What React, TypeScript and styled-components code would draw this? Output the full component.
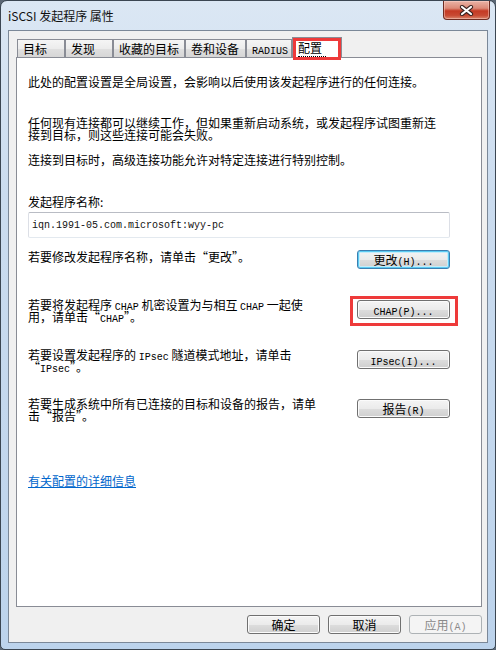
import styled, { createGlobalStyle } from "styled-components";

const GlobalStyle = createGlobalStyle`
  html, body {
    margin: 0;
    padding: 0;
    background: #5b6775;
  }
  body {
    font-family: "Noto Sans CJK SC", "Liberation Sans", sans-serif;
    font-size: 12px;
    color: #000;
  }
`

const Window = styled.div`
  width: 496px;
  height: 650px;
  box-sizing: border-box;
  border: 1px solid #3b4652;
  border-radius: 7px 7px 5px 5px;
  background: linear-gradient(180deg, #dbe7f4 0%, #cbdcef 30%, #bcd3ec 100%);
  padding: 0 7px 6px 7px;
  display: flex;
  flex-direction: column;
`

const TitleBar = styled.div`
  height: 29px;
  display: flex;
  justify-content: space-between;
  align-items: flex-start;
  flex-shrink: 0;
`

const Title = styled.div`
  margin-top: 7px;
  line-height: 16px;
  font-size: 12px;
  color: #111;
`

const CloseButton = styled.div`
  width: 47px;
  height: 19px;
  margin-right: -2px;
  box-sizing: border-box;
  border: 1px solid #6e2c22;
  border-top: none;
  border-radius: 0 0 4px 4px;
  background: linear-gradient(180deg, #eab3a6 0%, #dc8a78 40%, #c43a24 55%, #c84a33 80%, #d9866d 100%);
  box-shadow: inset 0 0 0 1px rgba(255, 220, 210, 0.45);
  display: flex;
  align-items: center;
  justify-content: center;
`

const Client = styled.div`
  flex: 1;
  border: 1px solid #7b8898;
  background: #f0f0f0;
  padding: 6px 5px 8px 7px;
  display: flex;
  flex-direction: column;
`

const TabStrip = styled.div`
  height: 20px;
  display: flex;
  align-items: flex-end;
  padding-left: 1px;
  position: relative;
  z-index: 1;
`

const Tab = styled.div<{ $w: number; $active?: boolean }>`
  position: relative;
  width: ${p => p.$w}px;
  height: ${p => (p.$active ? 21 : 18)}px;
  margin-bottom: ${p => (p.$active ? -1 : 0)}px;
  box-sizing: border-box;
  border: 1px solid #898c95;
  border-bottom: none;
  background: ${p => (p.$active ? '#fff' : 'linear-gradient(180deg, #f5f5f5 0%, #ececec 50%, #e0e0e0 51%, #d6d6d6 100%)')};
  padding-left: 5px;
  line-height: ${p => (p.$active ? 19 : 17)}px;
  white-space: nowrap;
`

const FocusLabel = styled.span`
  border-bottom: 1px dotted #000;
  padding: 0 4px 0 0;
`

const Highlight = styled.div<{ $t: number; $l: number; $r: number; $b: number }>`
  position: absolute;
  top: ${p => p.$t}px;
  left: ${p => p.$l}px;
  right: ${p => p.$r}px;
  bottom: ${p => p.$b}px;
  border: 3px solid #ee3a3a;
  pointer-events: none;
`

const Panel = styled.div`
  height: 550px;
  box-sizing: border-box;
  background: #fff;
  border: 1px solid #898c95;
  padding: 0 31px 0 11px;
  display: flex;
  flex-direction: column;
`

const Para = styled.p<{ $top: number }>`
  margin: ${p => p.$top}px 0 0 0;
  line-height: 12px;
  white-space: nowrap;
`

// half-width latin runs, 6px per char like the dialog's bitmap font
const Lat = styled.span`
  font-family: "Liberation Mono", monospace;
  font-size: 10px;
  line-height: 0;
`

const NameBox = styled.div`
  margin-top: 4px;
  height: 26px;
  box-sizing: border-box;
  border: 1px solid;
  border-color: #b9bcc4 #dcdfe6 #e3e9ef #dcdfe6;
  border-radius: 2px;
  padding-left: 3px;
  display: flex;
  align-items: center;
  font-family: "Liberation Mono", monospace;
  font-size: 10px;
  color: #111;
`

const Row = styled.div<{ $top: number }>`
  margin-top: ${p => p.$top}px;
  display: flex;
  align-items: flex-start;
`

const RowText = styled.p<{ $shift: number }>`
  margin: ${p => p.$shift}px 0 0 0;
  width: 329px;
  flex-shrink: 0;
  line-height: 12px;
  white-space: nowrap;
`

const ButtonSlot = styled.div<{ $shift: number }>`
  position: relative;
  margin-top: ${p => p.$shift}px;
`

const Button = styled.div<{ $w: number; $variant?: 'default' | 'disabled' }>`
  width: ${p => p.$w}px;
  height: 19px;
  box-sizing: border-box;
  border: 1px solid ${p => (p.$variant === 'default' ? '#3c7fb1' : p.$variant === 'disabled' ? '#adb2b5' : '#707070')};
  border-radius: 3px;
  background: ${p => (p.$variant === 'disabled'
    ? '#f4f4f4'
    : 'linear-gradient(180deg, #f4f4f4 0%, #ebebeb 50%, #dddddd 51%, #cfcfcf 100%)')};
  box-shadow: ${p => (p.$variant === 'default'
    ? 'inset 0 0 0 1px #5ccbf2, inset 0 0 0 2px #c5ecfa'
    : p.$variant === 'disabled' ? 'none' : 'inset 0 0 0 1px #fbfbfb')};
  color: ${p => (p.$variant === 'disabled' ? '#8a8a8a' : '#000')};
  text-align: center;
  line-height: 17px;
  white-space: nowrap;
`

const InfoLink = styled.a`
  margin-top: 53px;
  align-self: flex-start;
  line-height: 12px;
  color: #0066cc;
  text-decoration: underline;
  cursor: pointer;
`

const Footer = styled.div`
  margin-top: 8px;
  display: flex;
  justify-content: flex-end;
  gap: 8px;
`

const CloseGlyph = () => (
  <svg width="15" height="11" viewBox="0 0 15 11">
    <path d="M3 2 L12 9 M12 2 L3 9" stroke="#3a2320" strokeWidth="4.2" strokeLinecap="round" fill="none" />
    <path d="M3 2 L12 9 M12 2 L3 9" stroke="#fff" strokeWidth="2.2" strokeLinecap="round" fill="none" />
  </svg>
)

const tabs: { label: React.ReactNode; w: number }[] = [
  { label: '目标', w: 48 },
  { label: '发现', w: 48 },
  { label: '收藏的目标', w: 72 },
  { label: '卷和设备', w: 61 },
  { label: <Lat>RADIUS</Lat>, w: 46 },
]

export default function App() {
  return <>
    <GlobalStyle/>
    <Window>
      <TitleBar>
        <Title>iSCSI 发起程序 属性</Title>
        <CloseButton><CloseGlyph/></CloseButton>
      </TitleBar>
      <Client>
        <TabStrip>
          {tabs.map((t, i) => <Tab key={i} $w={t.w}>{t.label}</Tab>)}
          <Tab $w={50} $active>
            <FocusLabel>配置</FocusLabel>
            <Highlight $t={0} $l={0} $r={0} $b={-2}/>
          </Tab>
        </TabStrip>
        <Panel>
          <Para $top={18}>此处的配置设置是全局设置，会影响以后使用该发起程序进行的任何连接。</Para>
          <Para $top={29}>
            任何现有连接都可以继续工作，但如果重新启动系统，或发起程序试图重新连<br/>
            接到目标，则这些连接可能会失败。
          </Para>
          <Para $top={13}>连接到目标时，高级连接功能允许对特定连接进行特别控制。</Para>
          <Para $top={30}>发起程序名称:</Para>
          <NameBox>iqn.1991-05.com.microsoft:wyy-pc</NameBox>

          <Row $top={12}>
            <RowText $shift={1}>若要修改发起程序名称，请单击“更改”。</RowText>
            <ButtonSlot $shift={0}>
              <Button $w={93} $variant="default">更改<Lat>(H)...</Lat></Button>
            </ButtonSlot>
          </Row>

          <Row $top={30}>
            <RowText $shift={0}>
              若要将发起程序 <Lat>CHAP</Lat> 机密设置为与相互 <Lat>CHAP</Lat> 一起使<br/>
              用，请单击“<Lat>CHAP</Lat>”。
            </RowText>
            <ButtonSlot $shift={1}>
              <Button $w={93}><Lat>CHAP(P)...</Lat></Button>
              <Highlight $t={-4} $l={-7} $r={-8} $b={-7}/>
            </ButtonSlot>
          </Row>

          <Row $top={26}>
            <RowText $shift={0}>
              若要设置发起程序的 <Lat>IPsec</Lat> 隧道模式地址，请单击<br/>
              “<Lat>IPsec</Lat>”。
            </RowText>
            <ButtonSlot $shift={1}>
              <Button $w={93}><Lat>IPsec(I)...</Lat></Button>
            </ButtonSlot>
          </Row>

          <Row $top={25}>
            <RowText $shift={0}>
              若要生成系统中所有已连接的目标和设备的报告，请单<br/>
              击“报告”。
            </RowText>
            <ButtonSlot $shift={1}>
              <Button $w={93}>报告<Lat>(R)</Lat></Button>
            </ButtonSlot>
          </Row>

          <InfoLink>有关配置的详细信息</InfoLink>
        </Panel>
        <Footer>
          <Button $w={73}>确定</Button>
          <Button $w={73}>取消</Button>
          <Button $w={73} $variant="disabled">应用<Lat>(A)</Lat></Button>
        </Footer>
      </Client>
    </Window>
  </>
}
